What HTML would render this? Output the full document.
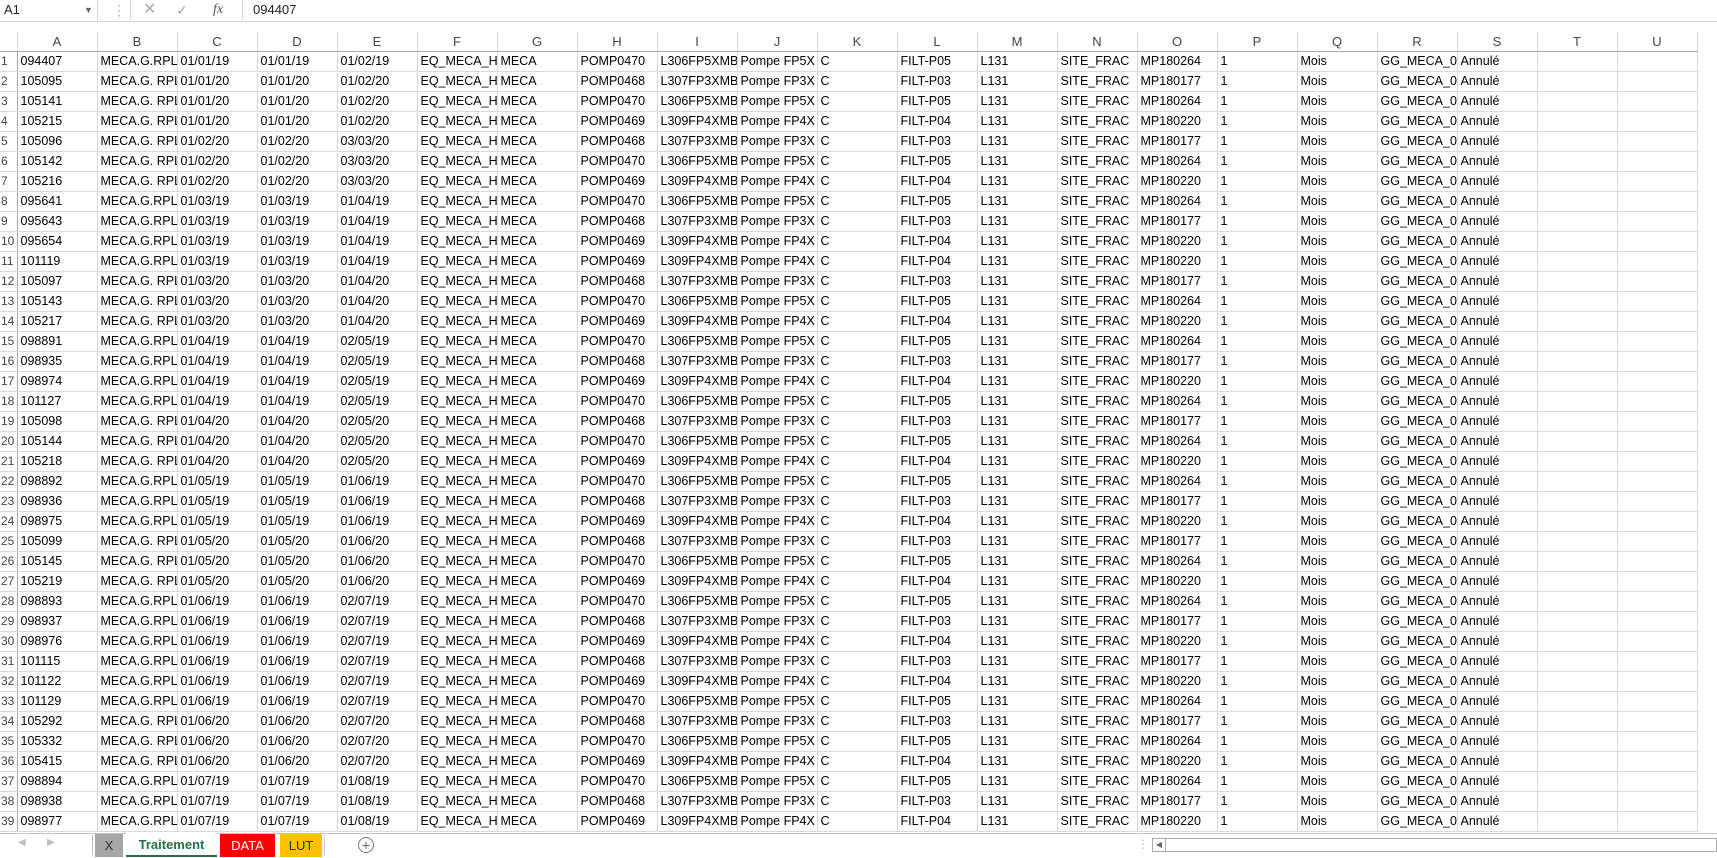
<!DOCTYPE html>
<html><head><meta charset="utf-8"><style>
body{margin:0;width:1717px;height:858px;overflow:hidden;background:#fff;font-family:"Liberation Sans",sans-serif;position:relative}
.fb{position:absolute;top:0;left:0;width:1717px;height:21px;border-bottom:1px solid #d6d6d6;background:#fff}
.nb{position:absolute;left:0;top:0;width:98px;height:20px;border-right:1px solid #d6d6d6;font-size:13px;line-height:20px;padding-left:4px;box-sizing:border-box;color:#222}
.ic{position:absolute;top:0;height:20px;line-height:20px;color:#aaa;font-size:14px}
.fx{position:absolute;left:242px;top:0;height:20px;border-left:1px solid #d6d6d6;font-size:13px;line-height:20px;padding-left:10px;color:#222}
table{position:absolute;top:32px;left:0;width:1697px;border-collapse:collapse;table-layout:fixed;font-size:12.5px;color:#000}
td,th{height:19px;padding:0 0 0 3px;border:1px solid #dadada;white-space:nowrap;overflow:hidden;font-weight:normal;text-align:left;line-height:19px}
thead th{text-align:center;color:#444;font-size:13px;height:18px;border-top:none;border-bottom:1px solid #ababab;padding:0}
tbody th{color:#444;padding:0 0 0 1px;border-left:none;border-right:1px solid #ababab;font-size:12px}
thead th:first-child{border-left:none}
.tabs{position:absolute;top:833px;left:0;width:1717px;height:25px;background:#fff}
.tab{position:absolute;top:1px;height:23px;line-height:23px;font-size:13px;text-align:center}
</style></head><body>
<div class="fb">
<div class="nb">A1<span style="position:absolute;left:84px;top:0;font-size:9px;color:#666">▼</span></div>
<div class="ic" style="left:112px">⋮</div>
<div style="position:absolute;left:130px;top:0;width:110px;height:20px;border-left:1px solid #d6d6d6"></div>
<div class="ic" style="left:143px;font-size:16px">✕</div>
<div class="ic" style="left:176px">✓</div>
<div class="ic" style="left:213px;font-style:italic;font-family:'Liberation Serif',serif;color:#555">fx</div>
<div class="fx">094407</div>
</div>
<table>
<colgroup><col style="width:17px"><col style="width:80px"><col style="width:80px"><col style="width:80px"><col style="width:80px"><col style="width:80px"><col style="width:80px"><col style="width:80px"><col style="width:80px"><col style="width:80px"><col style="width:80px"><col style="width:80px"><col style="width:80px"><col style="width:80px"><col style="width:80px"><col style="width:80px"><col style="width:80px"><col style="width:80px"><col style="width:80px"><col style="width:80px"><col style="width:80px"><col style="width:80px"></colgroup>
<thead><tr><th style="background:#fff"></th><th>A</th><th>B</th><th>C</th><th>D</th><th>E</th><th>F</th><th>G</th><th>H</th><th>I</th><th>J</th><th>K</th><th>L</th><th>M</th><th>N</th><th>O</th><th>P</th><th>Q</th><th>R</th><th>S</th><th>T</th><th>U</th></tr></thead>
<tbody>
<tr><th>1</th><td>094407</td><td>MECA.G.RPL</td><td>01/01/19</td><td>01/01/19</td><td>01/02/19</td><td>EQ_MECA_H</td><td>MECA</td><td>POMP0470</td><td>L306FP5XMB</td><td>Pompe FP5X</td><td>C</td><td>FILT-P05</td><td>L131</td><td>SITE_FRAC</td><td>MP180264</td><td>1</td><td>Mois</td><td>GG_MECA_0:</td><td>Annulé</td><td></td><td></td></tr>
<tr><th>2</th><td>105095</td><td>MECA.G. RPL</td><td>01/01/20</td><td>01/01/20</td><td>01/02/20</td><td>EQ_MECA_H</td><td>MECA</td><td>POMP0468</td><td>L307FP3XMB</td><td>Pompe FP3X</td><td>C</td><td>FILT-P03</td><td>L131</td><td>SITE_FRAC</td><td>MP180177</td><td>1</td><td>Mois</td><td>GG_MECA_0:</td><td>Annulé</td><td></td><td></td></tr>
<tr><th>3</th><td>105141</td><td>MECA.G. RPL</td><td>01/01/20</td><td>01/01/20</td><td>01/02/20</td><td>EQ_MECA_H</td><td>MECA</td><td>POMP0470</td><td>L306FP5XMB</td><td>Pompe FP5X</td><td>C</td><td>FILT-P05</td><td>L131</td><td>SITE_FRAC</td><td>MP180264</td><td>1</td><td>Mois</td><td>GG_MECA_0:</td><td>Annulé</td><td></td><td></td></tr>
<tr><th>4</th><td>105215</td><td>MECA.G. RPL</td><td>01/01/20</td><td>01/01/20</td><td>01/02/20</td><td>EQ_MECA_H</td><td>MECA</td><td>POMP0469</td><td>L309FP4XMB</td><td>Pompe FP4X</td><td>C</td><td>FILT-P04</td><td>L131</td><td>SITE_FRAC</td><td>MP180220</td><td>1</td><td>Mois</td><td>GG_MECA_0:</td><td>Annulé</td><td></td><td></td></tr>
<tr><th>5</th><td>105096</td><td>MECA.G. RPL</td><td>01/02/20</td><td>01/02/20</td><td>03/03/20</td><td>EQ_MECA_H</td><td>MECA</td><td>POMP0468</td><td>L307FP3XMB</td><td>Pompe FP3X</td><td>C</td><td>FILT-P03</td><td>L131</td><td>SITE_FRAC</td><td>MP180177</td><td>1</td><td>Mois</td><td>GG_MECA_0:</td><td>Annulé</td><td></td><td></td></tr>
<tr><th>6</th><td>105142</td><td>MECA.G. RPL</td><td>01/02/20</td><td>01/02/20</td><td>03/03/20</td><td>EQ_MECA_H</td><td>MECA</td><td>POMP0470</td><td>L306FP5XMB</td><td>Pompe FP5X</td><td>C</td><td>FILT-P05</td><td>L131</td><td>SITE_FRAC</td><td>MP180264</td><td>1</td><td>Mois</td><td>GG_MECA_0:</td><td>Annulé</td><td></td><td></td></tr>
<tr><th>7</th><td>105216</td><td>MECA.G. RPL</td><td>01/02/20</td><td>01/02/20</td><td>03/03/20</td><td>EQ_MECA_H</td><td>MECA</td><td>POMP0469</td><td>L309FP4XMB</td><td>Pompe FP4X</td><td>C</td><td>FILT-P04</td><td>L131</td><td>SITE_FRAC</td><td>MP180220</td><td>1</td><td>Mois</td><td>GG_MECA_0:</td><td>Annulé</td><td></td><td></td></tr>
<tr><th>8</th><td>095641</td><td>MECA.G.RPL</td><td>01/03/19</td><td>01/03/19</td><td>01/04/19</td><td>EQ_MECA_H</td><td>MECA</td><td>POMP0470</td><td>L306FP5XMB</td><td>Pompe FP5X</td><td>C</td><td>FILT-P05</td><td>L131</td><td>SITE_FRAC</td><td>MP180264</td><td>1</td><td>Mois</td><td>GG_MECA_0:</td><td>Annulé</td><td></td><td></td></tr>
<tr><th>9</th><td>095643</td><td>MECA.G.RPL</td><td>01/03/19</td><td>01/03/19</td><td>01/04/19</td><td>EQ_MECA_H</td><td>MECA</td><td>POMP0468</td><td>L307FP3XMB</td><td>Pompe FP3X</td><td>C</td><td>FILT-P03</td><td>L131</td><td>SITE_FRAC</td><td>MP180177</td><td>1</td><td>Mois</td><td>GG_MECA_0:</td><td>Annulé</td><td></td><td></td></tr>
<tr><th>10</th><td>095654</td><td>MECA.G.RPL</td><td>01/03/19</td><td>01/03/19</td><td>01/04/19</td><td>EQ_MECA_H</td><td>MECA</td><td>POMP0469</td><td>L309FP4XMB</td><td>Pompe FP4X</td><td>C</td><td>FILT-P04</td><td>L131</td><td>SITE_FRAC</td><td>MP180220</td><td>1</td><td>Mois</td><td>GG_MECA_0:</td><td>Annulé</td><td></td><td></td></tr>
<tr><th>11</th><td>101119</td><td>MECA.G.RPL</td><td>01/03/19</td><td>01/03/19</td><td>01/04/19</td><td>EQ_MECA_H</td><td>MECA</td><td>POMP0469</td><td>L309FP4XMB</td><td>Pompe FP4X</td><td>C</td><td>FILT-P04</td><td>L131</td><td>SITE_FRAC</td><td>MP180220</td><td>1</td><td>Mois</td><td>GG_MECA_0:</td><td>Annulé</td><td></td><td></td></tr>
<tr><th>12</th><td>105097</td><td>MECA.G. RPL</td><td>01/03/20</td><td>01/03/20</td><td>01/04/20</td><td>EQ_MECA_H</td><td>MECA</td><td>POMP0468</td><td>L307FP3XMB</td><td>Pompe FP3X</td><td>C</td><td>FILT-P03</td><td>L131</td><td>SITE_FRAC</td><td>MP180177</td><td>1</td><td>Mois</td><td>GG_MECA_0:</td><td>Annulé</td><td></td><td></td></tr>
<tr><th>13</th><td>105143</td><td>MECA.G. RPL</td><td>01/03/20</td><td>01/03/20</td><td>01/04/20</td><td>EQ_MECA_H</td><td>MECA</td><td>POMP0470</td><td>L306FP5XMB</td><td>Pompe FP5X</td><td>C</td><td>FILT-P05</td><td>L131</td><td>SITE_FRAC</td><td>MP180264</td><td>1</td><td>Mois</td><td>GG_MECA_0:</td><td>Annulé</td><td></td><td></td></tr>
<tr><th>14</th><td>105217</td><td>MECA.G. RPL</td><td>01/03/20</td><td>01/03/20</td><td>01/04/20</td><td>EQ_MECA_H</td><td>MECA</td><td>POMP0469</td><td>L309FP4XMB</td><td>Pompe FP4X</td><td>C</td><td>FILT-P04</td><td>L131</td><td>SITE_FRAC</td><td>MP180220</td><td>1</td><td>Mois</td><td>GG_MECA_0:</td><td>Annulé</td><td></td><td></td></tr>
<tr><th>15</th><td>098891</td><td>MECA.G.RPL</td><td>01/04/19</td><td>01/04/19</td><td>02/05/19</td><td>EQ_MECA_H</td><td>MECA</td><td>POMP0470</td><td>L306FP5XMB</td><td>Pompe FP5X</td><td>C</td><td>FILT-P05</td><td>L131</td><td>SITE_FRAC</td><td>MP180264</td><td>1</td><td>Mois</td><td>GG_MECA_0:</td><td>Annulé</td><td></td><td></td></tr>
<tr><th>16</th><td>098935</td><td>MECA.G.RPL</td><td>01/04/19</td><td>01/04/19</td><td>02/05/19</td><td>EQ_MECA_H</td><td>MECA</td><td>POMP0468</td><td>L307FP3XMB</td><td>Pompe FP3X</td><td>C</td><td>FILT-P03</td><td>L131</td><td>SITE_FRAC</td><td>MP180177</td><td>1</td><td>Mois</td><td>GG_MECA_0:</td><td>Annulé</td><td></td><td></td></tr>
<tr><th>17</th><td>098974</td><td>MECA.G.RPL</td><td>01/04/19</td><td>01/04/19</td><td>02/05/19</td><td>EQ_MECA_H</td><td>MECA</td><td>POMP0469</td><td>L309FP4XMB</td><td>Pompe FP4X</td><td>C</td><td>FILT-P04</td><td>L131</td><td>SITE_FRAC</td><td>MP180220</td><td>1</td><td>Mois</td><td>GG_MECA_0:</td><td>Annulé</td><td></td><td></td></tr>
<tr><th>18</th><td>101127</td><td>MECA.G.RPL</td><td>01/04/19</td><td>01/04/19</td><td>02/05/19</td><td>EQ_MECA_H</td><td>MECA</td><td>POMP0470</td><td>L306FP5XMB</td><td>Pompe FP5X</td><td>C</td><td>FILT-P05</td><td>L131</td><td>SITE_FRAC</td><td>MP180264</td><td>1</td><td>Mois</td><td>GG_MECA_0:</td><td>Annulé</td><td></td><td></td></tr>
<tr><th>19</th><td>105098</td><td>MECA.G. RPL</td><td>01/04/20</td><td>01/04/20</td><td>02/05/20</td><td>EQ_MECA_H</td><td>MECA</td><td>POMP0468</td><td>L307FP3XMB</td><td>Pompe FP3X</td><td>C</td><td>FILT-P03</td><td>L131</td><td>SITE_FRAC</td><td>MP180177</td><td>1</td><td>Mois</td><td>GG_MECA_0:</td><td>Annulé</td><td></td><td></td></tr>
<tr><th>20</th><td>105144</td><td>MECA.G. RPL</td><td>01/04/20</td><td>01/04/20</td><td>02/05/20</td><td>EQ_MECA_H</td><td>MECA</td><td>POMP0470</td><td>L306FP5XMB</td><td>Pompe FP5X</td><td>C</td><td>FILT-P05</td><td>L131</td><td>SITE_FRAC</td><td>MP180264</td><td>1</td><td>Mois</td><td>GG_MECA_0:</td><td>Annulé</td><td></td><td></td></tr>
<tr><th>21</th><td>105218</td><td>MECA.G. RPL</td><td>01/04/20</td><td>01/04/20</td><td>02/05/20</td><td>EQ_MECA_H</td><td>MECA</td><td>POMP0469</td><td>L309FP4XMB</td><td>Pompe FP4X</td><td>C</td><td>FILT-P04</td><td>L131</td><td>SITE_FRAC</td><td>MP180220</td><td>1</td><td>Mois</td><td>GG_MECA_0:</td><td>Annulé</td><td></td><td></td></tr>
<tr><th>22</th><td>098892</td><td>MECA.G.RPL</td><td>01/05/19</td><td>01/05/19</td><td>01/06/19</td><td>EQ_MECA_H</td><td>MECA</td><td>POMP0470</td><td>L306FP5XMB</td><td>Pompe FP5X</td><td>C</td><td>FILT-P05</td><td>L131</td><td>SITE_FRAC</td><td>MP180264</td><td>1</td><td>Mois</td><td>GG_MECA_0:</td><td>Annulé</td><td></td><td></td></tr>
<tr><th>23</th><td>098936</td><td>MECA.G.RPL</td><td>01/05/19</td><td>01/05/19</td><td>01/06/19</td><td>EQ_MECA_H</td><td>MECA</td><td>POMP0468</td><td>L307FP3XMB</td><td>Pompe FP3X</td><td>C</td><td>FILT-P03</td><td>L131</td><td>SITE_FRAC</td><td>MP180177</td><td>1</td><td>Mois</td><td>GG_MECA_0:</td><td>Annulé</td><td></td><td></td></tr>
<tr><th>24</th><td>098975</td><td>MECA.G.RPL</td><td>01/05/19</td><td>01/05/19</td><td>01/06/19</td><td>EQ_MECA_H</td><td>MECA</td><td>POMP0469</td><td>L309FP4XMB</td><td>Pompe FP4X</td><td>C</td><td>FILT-P04</td><td>L131</td><td>SITE_FRAC</td><td>MP180220</td><td>1</td><td>Mois</td><td>GG_MECA_0:</td><td>Annulé</td><td></td><td></td></tr>
<tr><th>25</th><td>105099</td><td>MECA.G. RPL</td><td>01/05/20</td><td>01/05/20</td><td>01/06/20</td><td>EQ_MECA_H</td><td>MECA</td><td>POMP0468</td><td>L307FP3XMB</td><td>Pompe FP3X</td><td>C</td><td>FILT-P03</td><td>L131</td><td>SITE_FRAC</td><td>MP180177</td><td>1</td><td>Mois</td><td>GG_MECA_0:</td><td>Annulé</td><td></td><td></td></tr>
<tr><th>26</th><td>105145</td><td>MECA.G. RPL</td><td>01/05/20</td><td>01/05/20</td><td>01/06/20</td><td>EQ_MECA_H</td><td>MECA</td><td>POMP0470</td><td>L306FP5XMB</td><td>Pompe FP5X</td><td>C</td><td>FILT-P05</td><td>L131</td><td>SITE_FRAC</td><td>MP180264</td><td>1</td><td>Mois</td><td>GG_MECA_0:</td><td>Annulé</td><td></td><td></td></tr>
<tr><th>27</th><td>105219</td><td>MECA.G. RPL</td><td>01/05/20</td><td>01/05/20</td><td>01/06/20</td><td>EQ_MECA_H</td><td>MECA</td><td>POMP0469</td><td>L309FP4XMB</td><td>Pompe FP4X</td><td>C</td><td>FILT-P04</td><td>L131</td><td>SITE_FRAC</td><td>MP180220</td><td>1</td><td>Mois</td><td>GG_MECA_0:</td><td>Annulé</td><td></td><td></td></tr>
<tr><th>28</th><td>098893</td><td>MECA.G.RPL</td><td>01/06/19</td><td>01/06/19</td><td>02/07/19</td><td>EQ_MECA_H</td><td>MECA</td><td>POMP0470</td><td>L306FP5XMB</td><td>Pompe FP5X</td><td>C</td><td>FILT-P05</td><td>L131</td><td>SITE_FRAC</td><td>MP180264</td><td>1</td><td>Mois</td><td>GG_MECA_0:</td><td>Annulé</td><td></td><td></td></tr>
<tr><th>29</th><td>098937</td><td>MECA.G.RPL</td><td>01/06/19</td><td>01/06/19</td><td>02/07/19</td><td>EQ_MECA_H</td><td>MECA</td><td>POMP0468</td><td>L307FP3XMB</td><td>Pompe FP3X</td><td>C</td><td>FILT-P03</td><td>L131</td><td>SITE_FRAC</td><td>MP180177</td><td>1</td><td>Mois</td><td>GG_MECA_0:</td><td>Annulé</td><td></td><td></td></tr>
<tr><th>30</th><td>098976</td><td>MECA.G.RPL</td><td>01/06/19</td><td>01/06/19</td><td>02/07/19</td><td>EQ_MECA_H</td><td>MECA</td><td>POMP0469</td><td>L309FP4XMB</td><td>Pompe FP4X</td><td>C</td><td>FILT-P04</td><td>L131</td><td>SITE_FRAC</td><td>MP180220</td><td>1</td><td>Mois</td><td>GG_MECA_0:</td><td>Annulé</td><td></td><td></td></tr>
<tr><th>31</th><td>101115</td><td>MECA.G.RPL</td><td>01/06/19</td><td>01/06/19</td><td>02/07/19</td><td>EQ_MECA_H</td><td>MECA</td><td>POMP0468</td><td>L307FP3XMB</td><td>Pompe FP3X</td><td>C</td><td>FILT-P03</td><td>L131</td><td>SITE_FRAC</td><td>MP180177</td><td>1</td><td>Mois</td><td>GG_MECA_0:</td><td>Annulé</td><td></td><td></td></tr>
<tr><th>32</th><td>101122</td><td>MECA.G.RPL</td><td>01/06/19</td><td>01/06/19</td><td>02/07/19</td><td>EQ_MECA_H</td><td>MECA</td><td>POMP0469</td><td>L309FP4XMB</td><td>Pompe FP4X</td><td>C</td><td>FILT-P04</td><td>L131</td><td>SITE_FRAC</td><td>MP180220</td><td>1</td><td>Mois</td><td>GG_MECA_0:</td><td>Annulé</td><td></td><td></td></tr>
<tr><th>33</th><td>101129</td><td>MECA.G.RPL</td><td>01/06/19</td><td>01/06/19</td><td>02/07/19</td><td>EQ_MECA_H</td><td>MECA</td><td>POMP0470</td><td>L306FP5XMB</td><td>Pompe FP5X</td><td>C</td><td>FILT-P05</td><td>L131</td><td>SITE_FRAC</td><td>MP180264</td><td>1</td><td>Mois</td><td>GG_MECA_0:</td><td>Annulé</td><td></td><td></td></tr>
<tr><th>34</th><td>105292</td><td>MECA.G. RPL</td><td>01/06/20</td><td>01/06/20</td><td>02/07/20</td><td>EQ_MECA_H</td><td>MECA</td><td>POMP0468</td><td>L307FP3XMB</td><td>Pompe FP3X</td><td>C</td><td>FILT-P03</td><td>L131</td><td>SITE_FRAC</td><td>MP180177</td><td>1</td><td>Mois</td><td>GG_MECA_0:</td><td>Annulé</td><td></td><td></td></tr>
<tr><th>35</th><td>105332</td><td>MECA.G. RPL</td><td>01/06/20</td><td>01/06/20</td><td>02/07/20</td><td>EQ_MECA_H</td><td>MECA</td><td>POMP0470</td><td>L306FP5XMB</td><td>Pompe FP5X</td><td>C</td><td>FILT-P05</td><td>L131</td><td>SITE_FRAC</td><td>MP180264</td><td>1</td><td>Mois</td><td>GG_MECA_0:</td><td>Annulé</td><td></td><td></td></tr>
<tr><th>36</th><td>105415</td><td>MECA.G. RPL</td><td>01/06/20</td><td>01/06/20</td><td>02/07/20</td><td>EQ_MECA_H</td><td>MECA</td><td>POMP0469</td><td>L309FP4XMB</td><td>Pompe FP4X</td><td>C</td><td>FILT-P04</td><td>L131</td><td>SITE_FRAC</td><td>MP180220</td><td>1</td><td>Mois</td><td>GG_MECA_0:</td><td>Annulé</td><td></td><td></td></tr>
<tr><th>37</th><td>098894</td><td>MECA.G.RPL</td><td>01/07/19</td><td>01/07/19</td><td>01/08/19</td><td>EQ_MECA_H</td><td>MECA</td><td>POMP0470</td><td>L306FP5XMB</td><td>Pompe FP5X</td><td>C</td><td>FILT-P05</td><td>L131</td><td>SITE_FRAC</td><td>MP180264</td><td>1</td><td>Mois</td><td>GG_MECA_0:</td><td>Annulé</td><td></td><td></td></tr>
<tr><th>38</th><td>098938</td><td>MECA.G.RPL</td><td>01/07/19</td><td>01/07/19</td><td>01/08/19</td><td>EQ_MECA_H</td><td>MECA</td><td>POMP0468</td><td>L307FP3XMB</td><td>Pompe FP3X</td><td>C</td><td>FILT-P03</td><td>L131</td><td>SITE_FRAC</td><td>MP180177</td><td>1</td><td>Mois</td><td>GG_MECA_0:</td><td>Annulé</td><td></td><td></td></tr>
<tr><th>39</th><td>098977</td><td>MECA.G.RPL</td><td>01/07/19</td><td>01/07/19</td><td>01/08/19</td><td>EQ_MECA_H</td><td>MECA</td><td>POMP0469</td><td>L309FP4XMB</td><td>Pompe FP4X</td><td>C</td><td>FILT-P04</td><td>L131</td><td>SITE_FRAC</td><td>MP180220</td><td>1</td><td>Mois</td><td>GG_MECA_0:</td><td>Annulé</td><td></td><td></td></tr>
</tbody></table>
<div class="tabs">
<div style="position:absolute;left:0;top:0;width:1717px;height:1px;background:#c6c6c6"></div>
<div style="position:absolute;left:18px;top:4px;font-size:10px;color:#c0c0c0">◀</div>
<div style="position:absolute;left:47px;top:4px;font-size:10px;color:#c0c0c0">▶</div>
<div style="position:absolute;left:92px;top:2px;width:1px;height:20px;background:#bbb"></div>
<div class="tab" style="left:95px;width:28px;background:#a6a6a6;color:#333">X</div>
<div class="tab" style="left:126px;width:91px;background:#fff;color:#217346;font-weight:bold;border-bottom:2px solid #217346;height:22px;top:0">Traitement</div>
<div class="tab" style="left:220px;width:55px;background:#ff0000;color:#fff">DATA</div>
<div class="tab" style="left:280px;width:42px;background:#ffc000;color:#333">LUT</div>
<div style="position:absolute;left:324px;top:2px;width:1px;height:20px;background:#ccc"></div>
<div style="position:absolute;left:358px;top:4px;width:14px;height:14px;border:1px solid #777;border-radius:50%;text-align:center;line-height:14px;font-size:14px;color:#666">+</div>
<div style="position:absolute;left:1137px;top:4px;font-size:12px;color:#bbb">⋮</div>
<div style="position:absolute;left:1152px;top:5px;width:565px;height:14px;border:1px solid #ababab;box-sizing:border-box"></div>
<div style="position:absolute;left:1153px;top:6px;width:12px;height:12px;border-right:1px solid #ababab;font-size:8px;line-height:12px;text-align:center;color:#666">◀</div>
</div>
</body></html>
